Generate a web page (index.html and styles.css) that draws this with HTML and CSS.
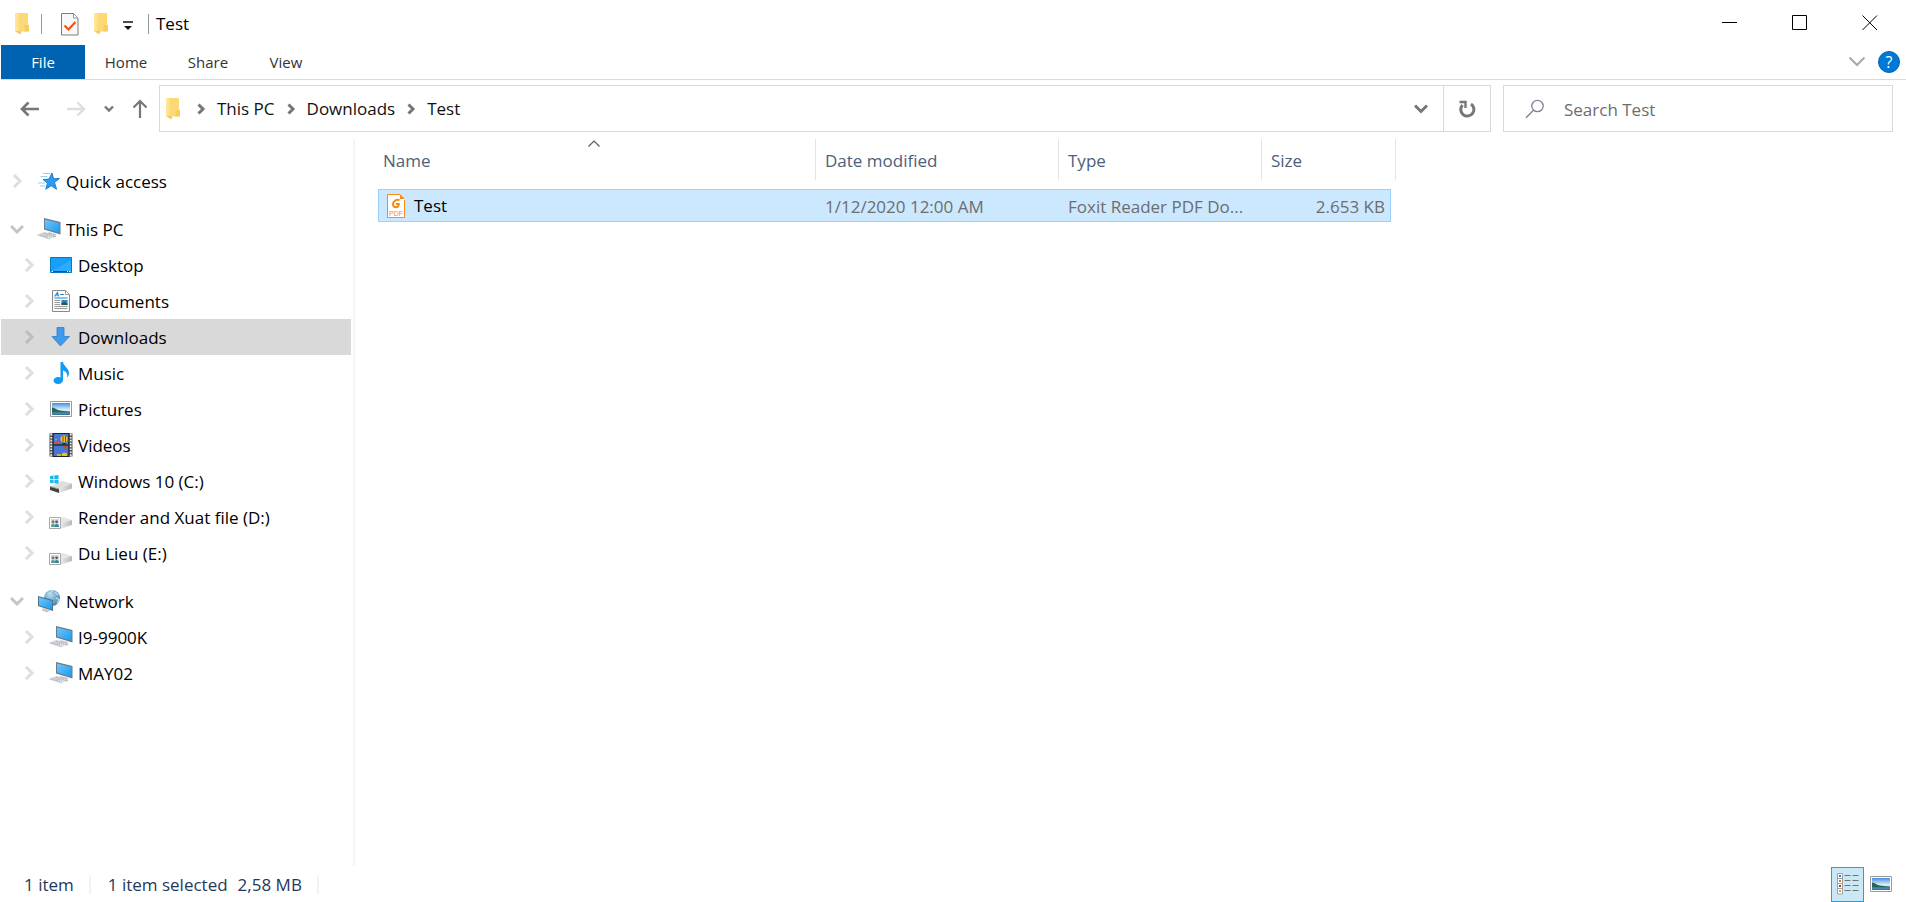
FILE: index.html
```html
<!DOCTYPE html>
<html lang="en">
<head>
<meta charset="utf-8">
<title>Test</title>
<link rel="stylesheet" href="styles.css">
</head>
<body>
<svg class="defs" aria-hidden="true">
  <defs>
    <linearGradient id="gFold" x1="0" y1="0" x2="1" y2="0"><stop offset="0" stop-color="#ffe9a2"/><stop offset="1" stop-color="#fbd66d"/></linearGradient>
    <linearGradient id="gBlue" x1="0" y1="0" x2="1" y2="1"><stop offset="0" stop-color="#6cc5fb"/><stop offset="1" stop-color="#1e9bf0"/></linearGradient>
    <linearGradient id="gSky" x1="0" y1="0" x2="0" y2="1"><stop offset="0" stop-color="#4a8ddc"/><stop offset=".55" stop-color="#d5eefb"/><stop offset="1" stop-color="#9fc7de"/></linearGradient>
    <linearGradient id="gSea" x1="0" y1="0" x2="0" y2="1"><stop offset="0" stop-color="#7fb0cf"/><stop offset="1" stop-color="#2c6d9c"/></linearGradient>
    <linearGradient id="gDisk" x1="0" y1="0" x2="1" y2="0"><stop offset="0" stop-color="#e8e8e8"/><stop offset="1" stop-color="#b9b9b9"/></linearGradient>
    <radialGradient id="gGlobe" cx=".4" cy=".3" r=".8"><stop offset="0" stop-color="#b9dcef"/><stop offset="1" stop-color="#3379a8"/></radialGradient>
  </defs>
  <symbol id="folder" viewBox="0 0 16 24"><path d="M4 1h10v18.500H4z" fill="#fbd977"/><path d="M10.500 13H15v6.500h-4.500z" fill="#f7cd62"/><path d="M1 1h4.500l1.500 2v19l-1.500-.5L1 19z" fill="url(#gFold)"/><path d="M1 19l3.500 2.500L7 22v-3z" fill="#f3cb62"/></symbol>
  <symbol id="checkdoc" viewBox="0 0 18 23"><path d="M.5.500h12l4.500 4.500v17H.500z" fill="#f8f8fa" stroke="#7c7c7c"/><path d="M12.500.500v4.500H17z" fill="#fff" stroke="#9a9a9a"/><path d="M3.500 12.500l4 4L14.500 9" fill="none" stroke="#f2540e" stroke-width="2.200"/></symbol>
  <symbol id="chev" viewBox="0 0 14 14"><path d="M4 1l6 6-6 6" fill="none" stroke="currentColor" stroke-width="3"/></symbol>
  <symbol id="chevs" viewBox="0 0 14 14"><path d="M4.500 2.500L9 7l-4.500 4.500" fill="none" stroke="currentColor" stroke-width="3"/></symbol>
  <symbol id="star" viewBox="0 0 24 20"><path d="M15 2l1.500 5.800 6-.3-5 4 2 6.800-5.300-3.600L8.800 18.200l1.700-6L6 8.500l6-.4z" fill="#2c9bee" stroke="#1b7fc9"/><path d="M6 2.500h7M3.500 5.500h7M1 12h7M3 15h5" stroke="#9ccff2" stroke-width="1"/></symbol>
  <symbol id="pc" viewBox="0 0 24 24"><path d="M12 15l7 2v1.500l-5 1-5-1.500z" fill="#c8ccd0"/><path d="M7 1l16.500 4v12.500L7 12.500z" fill="#6c7a84"/><path d="M8 2.500l14.500 3.500v10L8 11.500z" fill="url(#gBlue)"/><path d="M.500 18l7-2.500 10 2.500-5 4z" fill="#e3e5e8" stroke="#b0b5ba" stroke-width=".6"/><path d="M3 18.300l8 2M5 17.500l9 2M7 16.500l8 2" stroke="#92999f" stroke-width=".7" stroke-dasharray="1.500 .8"/><path d="M15 19.500l3.500-.8 1 1-3 1z" fill="#b9bdc1"/></symbol>
  <symbol id="desktop" viewBox="0 0 24 18"><path d="M1.500 1.500h21v15h-21z" fill="#16a0fb" stroke="#0b78bd"/><path d="M2 16L22 4v12z" fill="#2cacff"/><path d="M2 15.500h20" stroke="#075a92"/><path d="M2.500 15.500h1.500M18 15.500h1M20 15.500h1.500" stroke="#fff"/></symbol>
  <symbol id="docs" viewBox="0 0 24 24"><path d="M3.500 1.500h13l4 4v17h-17z" fill="#fafafa" stroke="#8a8a8a"/><path d="M16.500 1.500v4h4z" fill="#fff" stroke="#8a8a8a" stroke-width=".8"/><path d="M5.500 7.500l3-4 1 4M6.500 6h3" fill="none" stroke="#2c86c8" stroke-width="1.200"/><path d="M11 5.500h4M5.500 9h13" stroke="#2c86c8"/><path d="M5.500 11.500H11M5.500 13.500H11M5.500 15.500H11M5.500 17.500h13M5.500 19.500h13" stroke="#9a9a9a"/><path d="M12.500 11h6v5h-6z" fill="#2c86c8"/><path d="M12.500 14l3-1 3 1.500V16h-6z" fill="#245b4c"/></symbol>
  <symbol id="down" viewBox="0 0 24 24"><path d="M8 2.500h7v9h5.500L11.500 21 3 11.500h5z" fill="#3c9bec" stroke="#2b80ca" stroke-width=".8"/></symbol>
  <symbol id="music" viewBox="0 0 24 24"><path d="M11.500 1H14c.5 4 6 6 6 11 0 2-.8 3.500-1.800 4.500.7-4-1.200-6-4.200-7V19c0 2.500-2.500 4-5 4s-4.500-1.200-4.500-3.200S6.500 16 9 16c1 0 1.800.2 2.500.5z" fill="#109bf5"/></symbol>
  <symbol id="pic" viewBox="0 0 24 18"><path d="M1.500 1.500h21v15h-21z" fill="#fff" stroke="#9b9b9b"/><path d="M3 3h18v12H3z" fill="url(#gSky)"/><path d="M3 11h18v4H3z" fill="url(#gSea)"/><path d="M3 7.500c3 .5 5 2.500 8 3l10 1.500v.500L3 12.500z" fill="#2a6457"/></symbol>
  <symbol id="video" viewBox="0 0 24 24"><path d="M.500 .500h23v23H.500z" fill="#555"/><path d="M4.500 1h15v10.300h-15zM4.500 12.800h15V23h-15z" fill="#4578d4"/><path d="M2.500 1v22M21.500 1v22" stroke="#eee" stroke-width="2.200" stroke-dasharray="1.600 1.300"/><circle cx="15" cy="6" r="3.600" fill="#e8c22a"/><path d="M14 3v6M16.500 3v6" stroke="#9a3b1d"/><path d="M13.500 10h3v1.500h-3z" fill="#222"/><path d="M5 10c1-3 3-3 4-1h2v2H5z" fill="#d84c50"/><circle cx="7" cy="6.500" r="1" fill="#5fcf68"/><path d="M14 13h4l-1.500 3h-1z" fill="#c54e28"/><circle cx="15.500" cy="22" r="2.600" fill="#e8c22a"/><path d="M8 21h4v2H8z" fill="#d6b432"/><path d="M4 0v24M20 0v24M4 12h16M4 .500h16M4 23.500h16" stroke="#1f2530" stroke-width="1.200"/></symbol>
  <symbol id="win" viewBox="0 0 24 20"><path d="M1 13l12-6 10 2.500-13 5z" fill="#dedede"/><path d="M23 9.500v5L10 19v-4.500z" fill="url(#gDisk)"/><path d="M1 12.500l9 2.500v4l-9-3z" fill="#3f4144"/><path d="M1 12.500l9 2.500" stroke="#999"/><path d="M1 2l3.500-.5v3.500H1zM5.300 1.400L9.500 1v4H5.300zM1 5.800h3.500v3.500L1 9zM5.300 5.800h4.200v4l-4.200-.5z" fill="#19b9f2"/></symbol>
  <symbol id="share" viewBox="0 0 24 20"><path d="M9 8l5-2 9 3-10 4z" fill="#e6e6e6"/><path d="M23 9v5l-11 3.500v-5z" fill="url(#gDisk)"/><path d="M.500 6.500h11v11H.500z" fill="#fff" stroke="#a8a8a8"/><path d="M2 8h8v8H2z" fill="#cfdcdf"/><path d="M2 16c0-4 3.500-4 4-1v1z" fill="#5aa58e"/><path d="M5.500 16c0-4 4.500-4 4.500 0z" fill="#3d7fa8"/><circle cx="4" cy="10.800" r="1.400" fill="#8a6e55"/><circle cx="7.600" cy="10.800" r="1.400" fill="#4b5f70"/></symbol>
  <symbol id="net" viewBox="0 0 24 24"><circle cx="15" cy="9" r="8" fill="url(#gGlobe)"/><path d="M11 5c2-2 4-2 5-4M18 3l3 3M19 9l3 1.500-2 4" fill="none" stroke="#c4e0ee" stroke-width="1.200"/><path d="M1 7l15 4v11L1 17z" fill="#4f6f85"/><path d="M2 8.300l13.200 3.600V20.700L2 16.200z" fill="url(#gBlue)"/><path d="M6 19l7 2.500-3 2-5-2z" fill="#c3c8cc"/></symbol>
  <symbol id="list" viewBox="0 0 22 22"><path d="M.500.500h5v20.500h-5z" fill="#fff" stroke="#a0a0a0"/><path d="M.500 5.500h5M.500 10.500h5M.500 15.500h5" stroke="#a0a0a0"/><path d="M2 2h2v2H2z" fill="#2a87b8"/><path d="M2 7h2v2H2z" fill="#d8792b"/><path d="M2 12h2v2H2z" fill="#b03224"/><path d="M2 17h2v2H2z" fill="#a7b045"/><path d="M7.500 2.500h6M15.500 2.500h6M7.500 7.500h6M15.500 7.500h6M7.500 12.500h6M15.500 12.500h6M7.500 17.500h6M15.500 17.500h6" stroke="#737373"/></symbol>
</svg>

<header class="titlebar">
  <div class="quick">
    <svg class="folder"><use href="#folder"/></svg>
    <span class="sep"></span>
    <button class="plain props" aria-label="Properties"><svg width="18" height="23"><use href="#checkdoc"/></svg></button>
    <button class="plain" aria-label="New folder"><svg class="folder"><use href="#folder"/></svg></button>
    <button class="plain custom" aria-label="Customize toolbar"><svg width="10" height="10" viewBox="0 0 10 10"><path d="M0 1h10" stroke="#111" stroke-width="1.500"/><path d="M1 5h8L5 9z" fill="#111"/></svg></button>
    <span class="sep"></span>
  </div>
  <h1>Test</h1>
  <div class="controls">
    <button aria-label="Minimize"><svg width="16" height="16" viewBox="0 0 16 16"><path d="M0 7.500h15"/></svg></button>
    <button aria-label="Maximize"><svg width="16" height="16" viewBox="0 0 16 16"><path d="M.5.500h14v14H.500z"/></svg></button>
    <button aria-label="Close"><svg width="16" height="16" viewBox="0 0 16 16"><path d="M.5.500l14.500 14.500M15 .500L.500 15"/></svg></button>
  </div>
</header>

<div class="ribbon">
  <button class="tab file">File</button>
  <button class="tab home">Home</button>
  <button class="tab share">Share</button>
  <button class="tab view">View</button>
  <div class="ribbon-end">
    <button class="plain" aria-label="Expand ribbon"><svg width="18" height="12" viewBox="0 0 18 12"><path d="M1.500 1.500L9 9l7.500-7.500" fill="none" stroke="#a9a9a9" stroke-width="2"/></svg></button>
    <button class="help" aria-label="Help">?</button>
  </div>
</div>

<div class="navbar">
  <div class="history">
    <button class="plain" aria-label="Back"><svg width="20" height="16" viewBox="0 0 20 16"><path d="M19 8H2M8.500 1.500L2 8l6.500 6.500" fill="none" stroke="#767676" stroke-width="2.600"/></svg></button>
    <button class="plain forward" aria-label="Forward"><svg width="20" height="16" viewBox="0 0 20 16"><path d="M1 8h17M11.500 1.500L18 8l-6.500 6.500" fill="none" stroke="#dedede" stroke-width="2.400"/></svg></button>
    <button class="plain recent" aria-label="Recent locations"><svg width="10" height="8" viewBox="0 0 10 8"><path d="M1 1.500l4 4 4-4" fill="none" stroke="#767676" stroke-width="2.400"/></svg></button>
    <button class="plain" aria-label="Up"><svg width="16" height="20" viewBox="0 0 16 20"><path d="M8 19V2M1.500 8.500L8 2l6.500 6.500" fill="none" stroke="#767676" stroke-width="2.200"/></svg></button>
  </div>
  <div class="address">
    <svg class="folder"><use href="#folder"/></svg>
    <svg class="crumb-chev"><use href="#chevs"/></svg>
    <a href="#">This PC</a>
    <svg class="crumb-chev"><use href="#chevs"/></svg>
    <a href="#">Downloads</a>
    <svg class="crumb-chev"><use href="#chevs"/></svg>
    <a href="#">Test</a>
    <button class="plain drop" aria-label="Previous locations"><svg width="14" height="10" viewBox="0 0 14 10"><path d="M1 1.500l6 6 6-6" fill="none" stroke="#767676" stroke-width="3"/></svg></button>
    <button class="plain refresh" aria-label="Refresh"><svg width="18" height="18" viewBox="0 0 18 18"><path d="M4.500 5A6.600 6.600 0 1 0 13 4" fill="none" stroke="#767676" stroke-width="3"/><path d="M1.500 2H7.500v6" fill="none" stroke="#767676" stroke-width="2.400"/></svg></button>
  </div>
  <label class="search">
    <svg width="20" height="20" viewBox="0 0 20 20"><circle cx="12.500" cy="7" r="5.700" fill="none" stroke="#7c8494" stroke-width="1.300"/><path d="M8.500 11.200L1 18.700" stroke="#7c8494" stroke-width="1.400"/></svg>
    <input type="search" placeholder="Search Test" aria-label="Search Test">
  </label>
</div>

<main>
  <nav class="tree" aria-label="Folders">
    <ul>
      <li class="root"><svg class="chev"><use href="#chev"/></svg><svg class="ico"><use href="#star"/></svg><a href="#">Quick access</a></li>
    </ul>
    <ul>
      <li class="root open"><svg class="chev"><use href="#chev"/></svg><svg class="ico"><use href="#pc"/></svg><a href="#">This PC</a></li>
      <li><svg class="chev"><use href="#chev"/></svg><svg class="ico"><use href="#desktop"/></svg><a href="#">Desktop</a></li>
      <li><svg class="chev"><use href="#chev"/></svg><svg class="ico"><use href="#docs"/></svg><a href="#">Documents</a></li>
      <li class="current"><svg class="chev"><use href="#chev"/></svg><svg class="ico"><use href="#down"/></svg><a href="#">Downloads</a></li>
      <li><svg class="chev"><use href="#chev"/></svg><svg class="ico"><use href="#music"/></svg><a href="#">Music</a></li>
      <li><svg class="chev"><use href="#chev"/></svg><svg class="ico"><use href="#pic"/></svg><a href="#">Pictures</a></li>
      <li><svg class="chev"><use href="#chev"/></svg><svg class="ico"><use href="#video"/></svg><a href="#">Videos</a></li>
      <li class="drive"><svg class="chev"><use href="#chev"/></svg><svg class="ico"><use href="#win"/></svg><a href="#">Windows 10 (C:)</a></li>
      <li class="drive low"><svg class="chev"><use href="#chev"/></svg><svg class="ico"><use href="#share"/></svg><a href="#">Render and Xuat file (D:)</a></li>
      <li class="drive low"><svg class="chev"><use href="#chev"/></svg><svg class="ico"><use href="#share"/></svg><a href="#">Du Lieu (E:)</a></li>
    </ul>
    <ul>
      <li class="root open"><svg class="chev"><use href="#chev"/></svg><svg class="ico"><use href="#net"/></svg><a href="#">Network</a></li>
      <li><svg class="chev"><use href="#chev"/></svg><svg class="ico"><use href="#pc"/></svg><a href="#">I9-9900K</a></li>
      <li><svg class="chev"><use href="#chev"/></svg><svg class="ico"><use href="#pc"/></svg><a href="#">MAY02</a></li>
    </ul>
  </nav>
  <section class="files">
    <table>
      <colgroup><col class="c-name"><col class="c-date"><col class="c-type"><col class="c-size"><col class="c-end"></colgroup>
      <thead>
        <tr>
          <th class="first"><div>Name<svg class="sort" width="12" height="7" viewBox="0 0 12 7"><path d="M.5 6.500L6 1l5.500 5.500" fill="none" stroke="#5a5a5a" stroke-width="1.200"/></svg></div></th>
          <th><div>Date modified</div></th>
          <th><div>Type</div></th>
          <th class="last"><div>Size</div></th>
          <td class="end"><div></div></td>
        </tr>
      </thead>
      <tbody>
        <tr>
          <td class="name"><svg width="18" height="24" viewBox="0 0 18 24"><path d="M.5.500H13L17.500 5v18.500H.500z" fill="#fff"/><path d="M13 .500H.500v23h17V6" fill="none" stroke="#f58a1f"/><path d="M13 0l5 5h-5z" fill="#f58a1f"/><path d="M12.500 6C10 5 6 6.500 6 10c0 2 1.300 3.200 3 3.200 1.800 0 2.800-1.200 2.800-3.200H9" fill="none" stroke="#f58a1f" stroke-width="2"/><text x="9" y="21.500" text-anchor="middle" class="pdf">PDF</text></svg>Test</td>
          <td>1/12/2020 12:00 AM</td>
          <td>Foxit Reader PDF Do...</td>
          <td class="size">2.653 KB</td>
        </tr>
      </tbody>
    </table>
  </section>
</main>

<footer class="status">
  <span class="cell">1 item</span>
  <span class="cell"><span>1 item selected</span><span>2,58 MB</span></span>
  <div class="views">
    <button class="view-btn on" aria-label="Details view"><svg width="22" height="22"><use href="#list"/></svg></button>
    <button class="view-btn" aria-label="Large icons view"><svg width="24" height="18"><use href="#pic"/></svg></button>
  </div>
</footer>
</body>
</html>
```
FILE: styles.css
```css
* { box-sizing: border-box; }
html, body { height: 100%; }
body {
  margin: 0;
  display: flex;
  flex-direction: column;
  background: #fff;
  color: #000;
  font: 17px/24px "Open Sans", "Noto Sans", sans-serif;
}
button, input { font: inherit; color: inherit; }
button { border: 0; background: none; padding: 0; display: flex; align-items: center; justify-content: center; }
a { color: inherit; text-decoration: none; }
svg { display: block; flex: none; }
.defs { position: absolute; width: 0; height: 0; }
.folder { width: 16px; height: 24px; }

.titlebar { height: 45px; display: flex; align-items: center; flex: none; padding: 3px 1px 0 14px; }
.quick { display: flex; align-items: center; height: 24px; }
.sep { width: 1px; height: 20px; background: #999; margin-left: 11px; }
.props { margin: 0 14px 0 19px; }
.custom { margin: 3px 4px 0 14px; }
h1 { margin: 0 0 0 7px; font-size: 17px; font-weight: 400; }
.controls { margin: -3px 0 0 auto; display: flex; align-self: stretch; }
.controls button { width: 70px; }
.controls path { fill: none; stroke: #000; }

.ribbon { display: flex; height: 35px; flex: none; margin-left: 1px; border-bottom: 1px solid #dadbdc; font-size: 15px; color: #333; }
.tab { width: 82px; height: 34px; }
.file { width: 84px; background: #0063b1; color: #fff; }
.view { width: 74px; }
.ribbon-end { margin-left: auto; display: flex; align-items: center; gap: 12px; padding-right: 6px; }
.help { width: 22px; height: 22px; border-radius: 50%; background: #0078d7; border: 1px solid #0a63ad; color: #fff; font-size: 16px; line-height: 20px; }

.navbar { display: flex; flex: none; padding: 5px 13px 7px 20px; }
.history { display: flex; align-items: center; width: 139px; flex: none; }
.forward { margin-left: 26px; }
.recent { margin: 0 18px 0 18px; }
.address { flex: 1; min-width: 0; height: 47px; display: flex; align-items: center; border: 1px solid #d9d9d9; padding-left: 5px; color: #111; }
.crumb-chev { width: 14px; height: 14px; margin: 0 9px; color: #767676; }
.address a { white-space: nowrap; }
.address .folder + .crumb-chev { margin-left: 13px; }
.drop { margin-left: auto; width: 44px; height: 45px; }
.refresh { width: 47px; height: 45px; border-left: 1px solid #d9d9d9; }
.search { width: 390px; height: 47px; margin-left: 12px; display: flex; align-items: center; gap: 19px; border: 1px solid #d9d9d9; padding-left: 21px; }
.search input { flex: 1; min-width: 0; border: 0; outline: 0; padding: 2px 0 0; background: none; }
.search input::placeholder { color: #6d6d6d; opacity: 1; }

main { flex: 1; min-height: 0; display: flex; }
.tree { width: 355px; flex: none; padding: 24px 2px 0 1px; border-right: 2px solid #f5f5f5; }
.tree ul { list-style: none; margin: 0 0 12px; padding: 0; }
.tree li { height: 36px; display: flex; align-items: center; padding-left: 21px; }
.tree li.root { padding-left: 9px; }
.chev { width: 14px; height: 14px; color: #dedede; }
.open .chev { transform: rotate(90deg); color: #c4c4c4; }
.current .chev { color: #bcbcbc; }
.ico { width: 24px; height: 24px; margin: 0 5px 0 13px; }
.root .ico { margin: 0 5px 0 13px; }
.drive .ico { align-self: flex-end; margin-bottom: 3px; }
.low .ico { margin-bottom: 2px; }
.current { background: #d9d9d9; }
.tree a { white-space: nowrap; padding-top: 2px; }

.files { flex: 1; min-width: 0; padding-left: 23px; }
table { border-collapse: separate; border-spacing: 0; table-layout: fixed; width: 1018px; }
.c-name { width: 438px; }
.c-date { width: 243px; }
.c-type { width: 203px; }
.c-size { width: 129px; }
.c-end { width: 5px; }
th, td { padding: 0; text-align: left; font-weight: 400; }
th { color: #4c607a; }
thead div { height: 41px; display: flex; align-items: center; padding: 3px 0 0 9px; border-right: 1px solid #e5e5e5; position: relative; }
thead th, thead td { padding-bottom: 9px; }
thead .last div { border-right: 0; }
thead .end div { padding: 0; }
thead .first div { padding-left: 5px; }
.sort { position: absolute; top: 1px; left: calc(50% - 9px); }
tbody td { height: 33px; background: #cce8ff; border: solid #99d1ff; border-width: 1px 0; padding: 2px 0 0 9px; color: #6d6d6d; white-space: nowrap; }
tbody .name { display: flex; align-items: center; gap: 9px; border-left-width: 1px; padding: 0 0 0 8px; color: #000; }
tbody .size { text-align: right; border-right-width: 1px; padding-right: 5px; }
.pdf { font: 7px "Liberation Sans", sans-serif; fill: #f58a1f; }

.status { display: flex; align-items: center; flex: none; height: 36px; padding: 0 13px 0 24px; color: #1e395b; }
.cell { display: flex; gap: 10px; padding: 1px 15px 0 0; margin-right: 17px; line-height: 18px; border-right: 2px solid #f3f3f3; }
.views { margin-left: auto; display: flex; align-items: center; }
.view-btn { width: 24px; height: 35px; margin-left: 5px; }
.view-btn.on { width: 33px; background: #cbe8f6; border: 1px solid #26a0da; }
```
